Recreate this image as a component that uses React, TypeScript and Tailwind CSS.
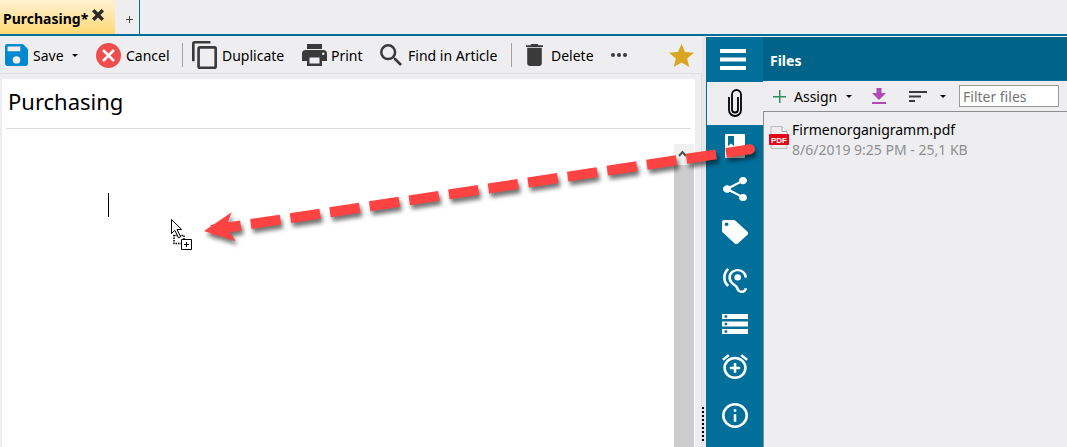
import type { ReactNode } from 'react';

type IconProps = { box: string; className: string; children: ReactNode };

function Icon({ box, className, children }: IconProps) {
  return (
    <svg viewBox={box} className={`shrink-0 ${className}`} fill="currentColor" preserveAspectRatio="none" aria-hidden="true">
      {children}
    </svg>
  );
}

function Caret() {
  return (
    <Icon box="0 0 6 3" className="h-[3px] w-[6px] text-black">
      <path d="M0 0h6L3 3z" />
    </Icon>
  );
}

function Separator() {
  return <div className="h-6 w-px shrink-0 bg-[#a3a3a6]" />;
}

function TabBar() {
  return (
    <nav className="flex h-9 shrink-0 border-b-2 border-[#006f9a] bg-[#eeeef0]" aria-label="Open articles">
      <div className="flex w-[115px] items-center gap-1 bg-linear-to-b from-[#fff1cf] to-[#ffd972] pl-[3px]">
        <a href="#purchasing" className="pt-1 text-sm font-bold text-black">Purchasing*</a>
        <button aria-label="Close tab" className="pb-1">
          <Icon box="0 0 12 12" className="h-3 w-3 text-[#2b2b2b]">
            <path d="M2.400 0 6 3.600 9.600 0 12 2.400 8.400 6 12 9.600 9.600 12 6 8.400 2.400 12 0 9.600 3.600 6 0 2.400z" />
          </Icon>
        </button>
      </div>
      <button aria-label="New tab" className="flex w-[25px] items-center justify-end border-r border-[#006f9a] pt-1 pr-[6px] text-[#444]">
        <Icon box="0 0 7 7" className="h-[7px] w-[7px]">
          <path d="M3 0h1v3h3v1H4v3H3V4H0V3h3z" />
        </Icon>
      </button>
    </nav>
  );
}

function Toolbar() {
  return (
    <div className="flex h-[38px] shrink-0 items-center border-b border-[#dfdfe2] pt-px pr-2 pl-[5px] text-[#3a3a3a]" role="toolbar">
      <button className="flex items-center">
        <Icon box="3 3 18 18" className="h-[22px] w-[23px] text-[#0089d0]">
          <path d="M17 3H5a2 2 0 0 0-2 2v14c0 1.100.9 2 2 2h14c1.100 0 2-.9 2-2V7zm-5 16a3 3 0 1 1 0-6 3 3 0 0 1 0 6zm3-10H5V5h10z" />
        </Icon>
        <span className="ml-[5px] w-[39px] pt-[2px] text-left text-black">Save</span>
        <Caret />
      </button>
      <button className="ml-[18px] flex items-center">
        <Icon box="0 0 25 25" className="h-[25px] w-[25px]">
          <circle cx="12.500" cy="12.500" r="12.500" fill="#ef4d4d" />
          <path d="m7 7 11 11M18 7 7 18" stroke="#fff" strokeWidth="2.500" />
        </Icon>
        <span className="ml-[5px] w-14 pt-[2px] text-left text-black">Cancel</span>
      </button>
      <Separator />
      <button className="ml-[9px] flex items-center">
        <Icon box="2 1 19 22" className="h-7 w-[25px]">
          <path d="M16 1H4a2 2 0 0 0-2 2v14h2V3h12zm3 4H8a2 2 0 0 0-2 2v14a2 2 0 0 0 2 2h11a2 2 0 0 0 2-2V7a2 2 0 0 0-2-2zm0 16H8V7h11z" />
        </Icon>
        <span className="ml-[5px] w-20 pt-[2px] text-left text-black">Duplicate</span>
      </button>
      <button className="flex items-center">
        <Icon box="2 3 20 18" className="h-[22px] w-[25px]">
          <path d="M19 8H5a3 3 0 0 0-3 3v6h4v4h12v-4h4v-6a3 3 0 0 0-3-3zm-3 11H8v-5h8zm3-7a1 1 0 1 1 0-2 1 1 0 0 1 0 2zM18 3H6v4h12z" />
        </Icon>
        <span className="ml-1 w-[49px] pt-[2px] text-left text-black">Print</span>
      </button>
      <button className="flex items-center">
        <Icon box="3 3 17.500 17.500" className="h-[22px] w-[22px]">
          <path d="M15.500 14h-.79l-.28-.27A6.471 6.471 0 0 0 16 9.500 6.500 6.500 0 1 0 9.500 16c1.610 0 3.090-.59 4.230-1.570l.27.28v.79l5 4.990L20.490 19zm-6 0a4.500 4.500 0 1 1 0-9 4.500 4.500 0 0 1 0 9z" />
        </Icon>
        <span className="ml-[6px] w-[103px] pt-[2px] text-left text-black">Find in Article</span>
      </button>
      <Separator />
      <button className="ml-[14px] flex items-center">
        <Icon box="5 3 14 18" className="h-[22px] w-[17px]">
          <path d="M6 19a2 2 0 0 0 2 2h8a2 2 0 0 0 2-2V6H6zM19 4h-3.500l-1-1h-5l-1 1H5v1.500h14z" />
        </Icon>
        <span className="ml-2 w-[60px] pt-[2px] text-left text-black">Delete</span>
      </button>
      <button aria-label="More actions">
        <Icon box="0 0 16 4" className="h-1 w-4">
          <circle cx="2" cy="2" r="2" />
          <circle cx="8" cy="2" r="2" />
          <circle cx="14" cy="2" r="2" />
        </Icon>
      </button>
      <button aria-label="Favorite" className="ml-auto">
        <Icon box="2 2 20 19" className="h-[23px] w-[25px] text-[#daa520]">
          <path d="M12 17.270 18.180 21l-1.640-7.030L22 9.240l-7.190-.61L12 2 9.190 8.630 2 9.240l5.460 4.730L5.820 21z" />
        </Icon>
      </button>
    </div>
  );
}

function DragCursor() {
  return (
    <svg viewBox="0 0 22 32" className="absolute top-[140px] left-[168px] h-8 w-[22px]" aria-hidden="true">
      <path d="M4 16.500h10v8H4z" fill="none" stroke="#000" strokeWidth="1.500" strokeDasharray="1.500 1" />
      <path d="M1.500.5v14l3.300-3.200 3.700 7.500 2.200-1-3.700-7.300h4.700z" fill="#fff" stroke="#000" />
      <path d="M11.500 20.500h10v10h-10z" fill="#fff" stroke="#000" />
      <path d="M16.500 23v5M14 25.500h5" stroke="#000" />
    </svg>
  );
}

function Editor() {
  return (
    <main className="flex min-h-0 grow flex-col border-r border-[#dfdfe2] pt-[5px] pr-[6px] pl-[2px]">
      <div className="relative flex min-h-0 grow flex-col bg-white">
        <h1 className="mr-1 ml-1 h-[50px] border-b border-[#dedee0] pt-[6px] pl-[2px] text-[22px] leading-8 text-black">Purchasing</h1>
        <div className="mt-[15px] flex grow">
          <div className="grow pt-[49px] pl-[106px]">
            <div className="h-6 w-px bg-black" />
          </div>
          <div className="mr-px w-5 bg-[#cdcdcd]">
            <button aria-label="Scroll up" className="flex h-[21px] w-full items-start bg-[#f0f0f0] pt-[6px] pl-1">
              <Icon box="0 0 9 7" className="h-[7px] w-[9px] text-[#505050]">
                <path d="M1 6 4.500 2 8 6" fill="none" stroke="currentColor" strokeWidth="2" />
              </Icon>
            </button>
          </div>
        </div>
        <DragCursor />
      </div>
    </main>
  );
}

const railGroups: { label: string; icon: ReactNode }[][] = [
  [
    {
      label: 'Bookmarks',
      icon: (
        <Icon box="0 0 20 24" className="h-6 w-5">
          <path fillRule="evenodd" d="M1 0h18a1 1 0 0 1 1 1v22a1 1 0 0 1-1 1H1a1 1 0 0 1-1-1V1a1 1 0 0 1 1-1zm2 2v10l3-2.500 3 2.500V2z" />
        </Icon>
      ),
    },
    {
      label: 'Share',
      icon: (
        <Icon box="3 2 18 20" className="h-6 w-6">
          <path d="M18 16.080c-.76 0-1.440.3-1.960.77L8.910 12.700c.05-.23.09-.46.09-.7s-.04-.47-.09-.7l7.050-4.110A3 3 0 1 0 15 5c0 .24.04.47.09.7L8.040 9.810A3 3 0 1 0 8.040 14.190l7.120 4.160c-.05.21-.08.43-.08.65a2.920 2.920 0 1 0 2.920-2.920z" />
        </Icon>
      ),
    },
    {
      label: 'Tags',
      icon: (
        <Icon box="2 2 20 20" className="h-6 w-[26px]">
          <path d="m21.410 11.580-9-9A2 2 0 0 0 11 2H4a2 2 0 0 0-2 2v7c0 .55.22 1.050.59 1.420l9 9a2 2 0 0 0 2.820 0l7-7a2 2 0 0 0 0-2.840zM5.500 7a1.500 1.500 0 1 1 0-3 1.500 1.500 0 0 1 0 3z" />
        </Icon>
      ),
    },
  ],
  [
    {
      label: 'Followers',
      icon: (
        <Icon box="3 1.200 18 20.800" className="h-[25px] w-6">
          <path d="M17 20c-.29 0-.56-.06-.76-.15-.71-.37-1.210-.88-1.710-2.380-.51-1.560-1.470-2.290-2.390-3-.79-.61-1.610-1.240-2.320-2.530C9.290 10.980 9 9.930 9 9c0-2.800 2.200-5 5-5s5 2.200 5 5h2c0-3.930-3.070-7-7-7S7 5.070 7 9c0 1.260.38 2.650 1.070 3.900.91 1.650 1.980 2.480 2.850 3.150.81.62 1.390 1.070 1.710 2.050.6 1.820 1.370 2.840 2.730 3.550.51.23 1.070.35 1.640.35 2.210 0 4-1.790 4-4h-2c0 1.100-.9 2-2 2zM7.640 2.640 6.220 1.220C4.230 3.210 3 5.960 3 9s1.230 5.790 3.220 7.780l1.410-1.410C6.010 13.740 5 11.490 5 9s1.010-4.740 2.640-6.360zM11.500 9a2.500 2.500 0 0 0 5 0 2.500 2.500 0 0 0-5 0z" />
        </Icon>
      ),
    },
    {
      label: 'Properties',
      icon: (
        <Icon box="2 4 20 16" className="h-5 w-[26px]">
          <path d="M2 20h20v-4H2zm2-3h2v2H4zM2 4v4h20V4zm4 3H4V5h2zm-4 7h20v-4H2zm2-3h2v2H4z" />
        </Icon>
      ),
    },
    {
      label: 'Reminders',
      icon: (
        <Icon box="2 1.700 20 20.300" className="h-[25px] w-[26px]">
          <path d="M7.880 3.390 6.600 1.860 2 5.710l1.290 1.530zM22 5.720l-4.600-3.860-1.290 1.530 4.600 3.860zM12 4a9 9 0 1 0 0 18 9 9 0 0 0 0-18zm0 16a7 7 0 1 1 0-14 7 7 0 0 1 0 14zm1-11h-2v3H8v2h3v3h2v-3h3v-2h-3z" />
        </Icon>
      ),
    },
  ],
  [
    {
      label: 'Information',
      icon: (
        <Icon box="2 2 20 20" className="h-[25px] w-[26px]">
          <path d="M11 17h2v-6h-2zm1-15a10 10 0 1 0 0 20 10 10 0 0 0 0-20zm0 18a8 8 0 1 1 0-16 8 8 0 0 1 0 16zM11 9h2V7h-2z" />
        </Icon>
      ),
    },
  ],
];

function Rail() {
  return (
    <nav className="flex w-[57px] shrink-0 flex-col bg-[#006f9a] text-white" aria-label="Panels">
      <button aria-label="Menu" className="flex h-[45px] items-center justify-center pr-1">
        <Icon box="0 0 26 21" className="h-[21px] w-[26px]">
          <path d="M0 0h26v4H0zM0 8.500h26v4H0zM0 17h26v4H0z" />
        </Icon>
      </button>
      <button aria-label="Files" className="ml-px flex h-[43px] items-center justify-center bg-[#eeeef0] pb-px text-black">
        <Icon box="0 0 14 28" className="h-7 w-[14px]">
          <path d="M10 8v12.500a3 3 0 0 1-6 0V5.500a4.500 4.500 0 0 1 9 0V21a6 6 0 0 1-12 0V8" fill="none" stroke="currentColor" strokeWidth="1.800" />
        </Icon>
      </button>
      <div className="flex flex-col gap-[6px]">
        {railGroups.map((group) => (
          <div key={group[0].label} className="flex flex-col">
            {group.map((item) => (
              <button key={item.label} aria-label={item.label} className="flex h-[43px] items-center justify-center pb-[2px]">
                {item.icon}
              </button>
            ))}
          </div>
        ))}
      </div>
    </nav>
  );
}

function PdfIcon() {
  return (
    <svg viewBox="0 0 20 23" className="mt-[6px] h-[23px] w-5 shrink-0" aria-hidden="true">
      <path d="M2 .5h11l5 5v17H2z" fill="#ececec" stroke="#bcbcbc" />
      <path d="M13 .5v5h5" fill="#fafafa" stroke="#a5a5a5" />
      <rect y="8" width="20" height="11" rx="1" fill="#e2061c" />
      <text x="10" y="16.500" textAnchor="middle" fontSize="8" fontWeight="700" fill="#fff" fontFamily="Liberation Sans, sans-serif">PDF</text>
    </svg>
  );
}

function FilesPanel() {
  return (
    <aside className="flex min-w-0 grow flex-col">
      <h2 className="flex h-11 shrink-0 items-center border-b border-[#006f9a] bg-[#006389] pt-1 pl-[7px] text-sm font-bold text-white">Files</h2>
      <div className="flex h-[30px] shrink-0 items-center pl-[10px]">
        <button className="flex items-center">
          <Icon box="0 0 13 13" className="h-[13px] w-[13px] text-[#338e62]">
            <path d="M6 0h1.500v6H13v1.500H7.500V13H6V7.500H0V6h6z" />
          </Icon>
          <span className="ml-2 w-[52px] pt-px text-left text-black">Assign</span>
          <Caret />
        </button>
        <button aria-label="Download" className="ml-5">
          <Icon box="0 0 14 16" className="h-4 w-[14px] text-[#b04ab5]">
            <path d="M4.500 0h5v5H14l-7 7-7-7h4.500zM0 14h14v2H0z" />
          </Icon>
        </button>
        <button aria-label="Sort" className="ml-[23px] flex items-center gap-[13px]">
          <Icon box="0 0 18 11" className="h-[11px] w-[18px] text-[#3a3a3a]">
            <path d="M0 0h18v2H0zM0 4.500h12v2H0zM0 9h6v2H0z" />
          </Icon>
          <Caret />
        </button>
        <input
          type="text"
          aria-label="Filter files"
          placeholder="Filter files"
          className="ml-[13px] h-[22px] w-[100px] border border-[#9b9b9b] bg-white px-[3px] leading-5 text-black placeholder:text-[#757575]"
        />
      </div>
      <ul className="grow border-t border-l border-[#8e8e90] pt-2 pl-[5px]">
        <li className="flex gap-[3px]">
          <PdfIcon />
          <a href="#file" className="flex flex-col leading-5">
            <span className="text-black">Firmenorganigramm.pdf</span>
            <span className="text-[#8e8e90]">8/6/2019 9:25 PM - 25,1 KB</span>
          </a>
        </li>
      </ul>
    </aside>
  );
}

function DragArrow() {
  return (
    <svg
      viewBox="0 0 570 110"
      className="pointer-events-none absolute top-[140px] left-[200px] h-[110px] w-[570px] drop-shadow-[2px_4px_2px_rgba(0,0,0,0.55)]"
      aria-hidden="true"
    >
      <path d="M11.200 90 551 9.100" stroke="#ff4242" strokeWidth="10" strokeDasharray="30 10.050" />
      <circle cx="550" cy="9.200" r="5" fill="#ff4242" />
      <path d="M4 91 31.700 72.300 27.500 83 30 92.500 35.700 101.300z" fill="#ff4242" />
    </svg>
  );
}

export default function App() {
  return (
    <div className="relative flex h-screen flex-col overflow-hidden bg-[#eeeef0] font-['Noto_Sans','Open_Sans',sans-serif] text-sm">
      <TabBar />
      <div className="flex min-h-0 grow">
        <div className="flex min-w-0 grow flex-col">
          <Toolbar />
          <div className="flex min-h-0 grow flex-col">
            <Editor />
          </div>
        </div>
        <div className="flex w-1 shrink-0 cursor-col-resize items-end bg-[#e8e8ea] pb-1">
          <svg viewBox="0 0 2 36" className="h-9 w-[2px]" aria-hidden="true">
            <path d="M1 0v36" stroke="#000" strokeWidth="2" strokeDasharray="2 2" />
          </svg>
        </div>
        <div className="mt-px flex w-[361px] shrink-0">
          <Rail />
          <FilesPanel />
        </div>
      </div>
      <DragArrow />
    </div>
  );
}
